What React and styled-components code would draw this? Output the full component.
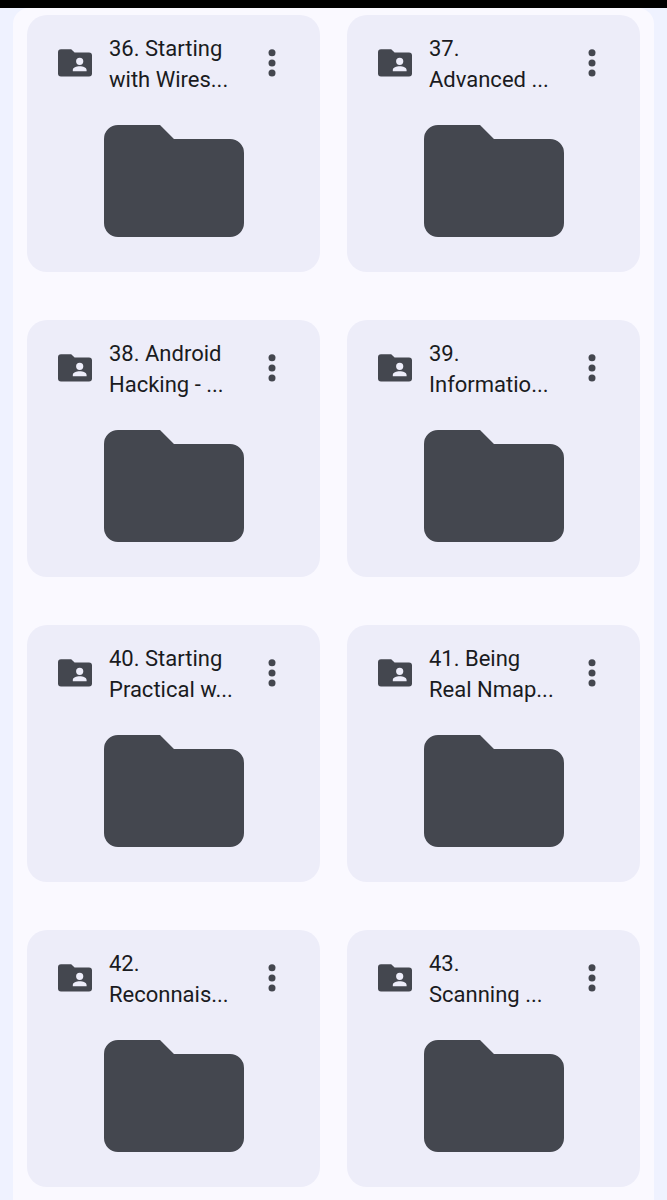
import React from 'react';
import styled, { createGlobalStyle } from 'styled-components';

const GlobalStyle = createGlobalStyle`
  * {
    box-sizing: border-box;
  }

  body {
    margin: 0;
    background: #eff2ff;
    font-family: Roboto, 'Liberation Sans', sans-serif;
    color: #1a1b21;
  }
`;

const StatusBar = styled.div`
  height: 8px;
  background: #000;
`;

const Panel = styled.main`
  margin: 0 13px;
  padding: 7px 14px 13px;
  border-radius: 16px 16px 0 0;
  background: #faf9ff;
`;

const Grid = styled.ul`
  display: grid;
  grid-template-columns: repeat(2, minmax(0, 1fr));
  gap: 48px 27px;
  margin: 0;
  padding: 0;
  list-style: none;
`;

const Card = styled.li`
  display: flex;
  flex-direction: column;
  align-items: center;
  gap: 30px;
  padding: 16px 31px 35px;
  border-radius: 20px;
  background: #ededf9;
`;

const Header = styled.div`
  display: flex;
  align-items: center;
  gap: 17px;
  width: 100%;
`;

const SharedIcon = styled.svg`
  flex: none;
  width: 34px;
  height: 28px;
  fill: #44474f;
`;

const Title = styled.h2`
  flex: 1;
  min-width: 0;
  margin: 0;
  padding-top: 2px;
  font-size: 22px;
  font-weight: 400;
  line-height: 31px;
  white-space: nowrap;
`;

const Line = styled.span`
  display: block;
`;

const MenuButton = styled.button`
  display: flex;
  flex: none;
  justify-content: center;
  width: 34px;
  padding: 0;
  border: 0;
  background: none;
  cursor: pointer;

  & svg {
    width: 8px;
    height: 28px;
    fill: #44474f;
  }
`;

const FolderIcon = styled.svg`
  width: 140px;
  height: 112px;
  fill: #44474f;
`;

const folders = [
  ['36. Starting', 'with Wires...'],
  ['37.', 'Advanced ...'],
  ['38. Android', 'Hacking - ...'],
  ['39.', 'Informatio...'],
  ['40. Starting', 'Practical w...'],
  ['41. Being', 'Real Nmap...'],
  ['42.', 'Reconnais...'],
  ['43.', 'Scanning ...'],
];

const Folder = ({ lines }) => (
  <Card>
    <Header>
      <SharedIcon viewBox="0 0 34 28" aria-hidden="true">
        <path
          fillRule="evenodd"
          d="M3 0.3H13.2L16.6 3.500H31Q34 3.500 34 6.500V24.500Q34 27.500 31 27.500H3Q0 27.500 0 24.500V3.300Q0 .3 3 .3ZM21.700 8.700a3.600 3.600 0 1 0 0 7.200a3.600 3.600 0 1 0 0-7.200ZM14.800 22.300H28.600V21C28.600 18.400 25.100 17.200 21.700 17.200S14.800 18.400 14.800 21Z"
        />
      </SharedIcon>
      <Title>
        {lines.map((line) => (
          <Line key={line}>{line}</Line>
        ))}
      </Title>
      <MenuButton type="button" aria-label={`More actions for ${lines.join(' ')}`}>
        <svg viewBox="0 0 8 28">
          <circle cx="4" cy="3.700" r="3.500" />
          <circle cx="4" cy="13.900" r="3.500" />
          <circle cx="4" cy="24.100" r="3.500" />
        </svg>
      </MenuButton>
    </Header>
    <FolderIcon viewBox="2 4 20 16" aria-hidden="true">
      <path d="M4 4H10L12 6H20A2 2 0 0 1 22 8V18A2 2 0 0 1 20 20H4A2 2 0 0 1 2 18V6A2 2 0 0 1 4 4Z" />
    </FolderIcon>
  </Card>
);

const App = () => {
  return (
    <>
      <GlobalStyle />
      <StatusBar />
      <Panel>
        <Grid>
          {folders.map((lines) => (
            <Folder key={lines[0]} lines={lines} />
          ))}
        </Grid>
      </Panel>
    </>
  );
};

export default App;
